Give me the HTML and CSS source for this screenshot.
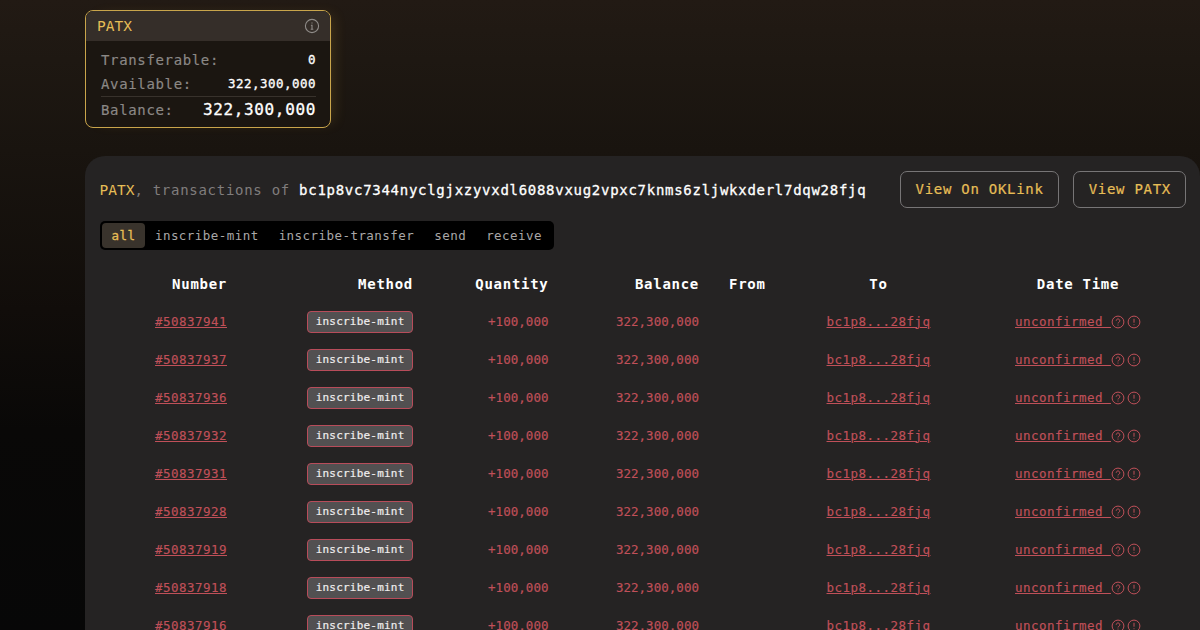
FILE: index.html
```html
<!DOCTYPE html>
<html lang="en">
<head>
<meta charset="utf-8">
<title>PATX transactions</title>
<link rel="stylesheet" href="styles.css">
</head>
<body>
<svg class="defs" width="0" height="0" aria-hidden="true">
  <symbol id="help" viewBox="0 0 14 14"><circle cx="7" cy="7" r="5.9"/><path d="M5.2 5.7a1.8 1.8 0 1 1 2.7 1.6c-.6.35-.9.6-.9 1.1M7 9.6v.9"/></symbol>
  <symbol id="warn" viewBox="0 0 14 14"><circle cx="7" cy="7" r="5.9"/><path d="M7 3.8v3.9M7 9.3v.9"/></symbol>
</svg>
<main class="page">
  <section class="card">
    <header class="card-head">
      <span class="ticker">PATX</span>
      <svg class="info" viewBox="0 0 16 16"><circle cx="8" cy="8" r="6.6"/><path d="M8 4.4v1.2M6.9 7.2H8v4M6.7 11.2h2.6"/></svg>
    </header>
    <dl class="stats">
      <div class="stat"><dt>Transferable:</dt><dd>0</dd></div>
      <div class="stat"><dt>Available:</dt><dd>322,300,000</dd></div>
      <div class="stat total"><dt>Balance:</dt><dd>322,300,000</dd></div>
    </dl>
  </section>
  <section class="panel">
    <div class="panel-head">
      <h1 class="title"><span class="ticker">PATX</span>, transactions of <span class="address">bc1p8vc7344nyclgjxzyvxdl6088vxug2vpxc7knms6zljwkxderl7dqw28fjq</span></h1>
      <div class="actions"><a class="button">View On OKLink</a><a class="button">View PATX</a></div>
    </div>
    <nav class="tabs"><a class="tab active">all</a><a class="tab">inscribe-mint</a><a class="tab">inscribe-transfer</a><a class="tab">send</a><a class="tab">receive</a></nav>
    <table class="table">
      <colgroup><col class="c-number"><col class="c-method"><col class="c-quantity"><col class="c-balance"><col class="c-from"><col class="c-to"><col class="c-date"></colgroup>
      <thead><tr><th>Number</th><th>Method</th><th>Quantity</th><th>Balance</th><th class="left">From</th><th class="center">To</th><th class="center">Date Time</th></tr></thead>
      <tbody>
        <tr><td><a class="link">#50837941</a></td><td><span class="tag">inscribe-mint</span></td><td class="num">+100,000</td><td class="num">322,300,000</td><td></td><td class="center"><a class="link">bc1p8...28fjq</a></td><td class="center"><span class="status"><a class="link">unconfirmed&nbsp;</a><svg><use href="#help"/></svg><svg><use href="#warn"/></svg></span></td></tr>
        <tr><td><a class="link">#50837937</a></td><td><span class="tag">inscribe-mint</span></td><td class="num">+100,000</td><td class="num">322,300,000</td><td></td><td class="center"><a class="link">bc1p8...28fjq</a></td><td class="center"><span class="status"><a class="link">unconfirmed&nbsp;</a><svg><use href="#help"/></svg><svg><use href="#warn"/></svg></span></td></tr>
        <tr><td><a class="link">#50837936</a></td><td><span class="tag">inscribe-mint</span></td><td class="num">+100,000</td><td class="num">322,300,000</td><td></td><td class="center"><a class="link">bc1p8...28fjq</a></td><td class="center"><span class="status"><a class="link">unconfirmed&nbsp;</a><svg><use href="#help"/></svg><svg><use href="#warn"/></svg></span></td></tr>
        <tr><td><a class="link">#50837932</a></td><td><span class="tag">inscribe-mint</span></td><td class="num">+100,000</td><td class="num">322,300,000</td><td></td><td class="center"><a class="link">bc1p8...28fjq</a></td><td class="center"><span class="status"><a class="link">unconfirmed&nbsp;</a><svg><use href="#help"/></svg><svg><use href="#warn"/></svg></span></td></tr>
        <tr><td><a class="link">#50837931</a></td><td><span class="tag">inscribe-mint</span></td><td class="num">+100,000</td><td class="num">322,300,000</td><td></td><td class="center"><a class="link">bc1p8...28fjq</a></td><td class="center"><span class="status"><a class="link">unconfirmed&nbsp;</a><svg><use href="#help"/></svg><svg><use href="#warn"/></svg></span></td></tr>
        <tr><td><a class="link">#50837928</a></td><td><span class="tag">inscribe-mint</span></td><td class="num">+100,000</td><td class="num">322,300,000</td><td></td><td class="center"><a class="link">bc1p8...28fjq</a></td><td class="center"><span class="status"><a class="link">unconfirmed&nbsp;</a><svg><use href="#help"/></svg><svg><use href="#warn"/></svg></span></td></tr>
        <tr><td><a class="link">#50837919</a></td><td><span class="tag">inscribe-mint</span></td><td class="num">+100,000</td><td class="num">322,300,000</td><td></td><td class="center"><a class="link">bc1p8...28fjq</a></td><td class="center"><span class="status"><a class="link">unconfirmed&nbsp;</a><svg><use href="#help"/></svg><svg><use href="#warn"/></svg></span></td></tr>
        <tr><td><a class="link">#50837918</a></td><td><span class="tag">inscribe-mint</span></td><td class="num">+100,000</td><td class="num">322,300,000</td><td></td><td class="center"><a class="link">bc1p8...28fjq</a></td><td class="center"><span class="status"><a class="link">unconfirmed&nbsp;</a><svg><use href="#help"/></svg><svg><use href="#warn"/></svg></span></td></tr>
        <tr><td><a class="link">#50837916</a></td><td><span class="tag">inscribe-mint</span></td><td class="num">+100,000</td><td class="num">322,300,000</td><td></td><td class="center"><a class="link">bc1p8...28fjq</a></td><td class="center"><span class="status"><a class="link">unconfirmed&nbsp;</a><svg><use href="#help"/></svg><svg><use href="#warn"/></svg></span></td></tr>
      </tbody>
    </table>
  </section>
</main>
</body>
</html>
```
FILE: styles.css
```css
* { box-sizing: border-box; }
html { background: #070707; }
body {
  margin: 0;
  height: 630px;
  overflow: hidden;
  background: linear-gradient(#221a14 0, #1e1812 60px, #19140f 150px, #110d0a 310px, #090807 430px, #070707 630px);
  color: #fff;
  font: 14.5px/20px "DejaVu Sans Mono", "Liberation Mono", monospace;
  letter-spacing: 0.4px;
}
.defs { position: absolute; }
.page { padding: 10px 0 0 85px; }

.card {
  width: 246px;
  height: 118px;
  border: 1px solid #c9a54b;
  border-radius: 8px;
  background: #1b1611;
  box-shadow: 8px 0 14px -6px rgba(201, 155, 60, 0.2);
  overflow: hidden;
}
.card-head {
  display: flex;
  align-items: center;
  justify-content: space-between;
  height: 30px;
  padding: 0 10px 0 11px;
  background: #352e29;
}
.ticker {
  color: #e6bd56;
  font-size: 14.5px;
  letter-spacing: 0;
}
.info { width: 16px; height: 16px; fill: none; stroke: #8f8b88; stroke-width: 1.1; }
.stats { margin: 0; padding: 7px 14px 0 15px; }
.stat { display: flex; align-items: center; justify-content: space-between; height: 24px; }
.stat dt { color: #8b8886; font-size: 14px; letter-spacing: 0.65px; -webkit-text-stroke: 0.15px; }
.stat dd { margin: 0; font-size: 12.5px; letter-spacing: 0.47px; -webkit-text-stroke: 0.3px; }
.total { height: 27px; border-top: 1px solid #38322c; }
.total dd { font-size: 16px; letter-spacing: 0.65px; }

.panel {
  width: 1115px;
  height: 474px;
  margin-top: 28px;
  padding: 14px 14px 0;
  border-radius: 20px 20px 0 0;
  background: #252323;
  overflow: hidden;
}
.panel-head { display: flex; align-items: center; justify-content: space-between; height: 38px; }
.title {
  margin: 0;
  padding: 2px 0 0 0.5px;
  color: #807d7d;
  font-size: 14px;
  font-weight: 400;
  letter-spacing: 0.72px;
  white-space: nowrap;
}
.address { color: #fff; -webkit-text-stroke: 0.3px; }
.actions { display: flex; gap: 14px; }
.button {
  height: 37px;
  padding: 0 14px 0 15px;
  border: 1px solid #777576;
  border-radius: 7px;
  color: #e6bd56;
  font-size: 14px;
  line-height: 35px;
  letter-spacing: 0.72px;
  white-space: nowrap;
  -webkit-text-stroke: 0.2px;
}

.tabs {
  display: flex;
  width: 454px;
  height: 29px;
  margin: 13px 0 0 1px;
  padding: 2px;
  border-radius: 5px;
  background: #000;
}
.tab {
  padding: 0 10px;
  border-radius: 4px;
  color: #a9a7a7;
  font-size: 12.5px;
  line-height: 25px;
  letter-spacing: 0.45px;
  white-space: nowrap;
}
.tab.active { background: #39332c; color: #e6bd56; padding: 0 9.5px; -webkit-text-stroke: 0.3px; }

.table {
  width: 1079px;
  margin: 15px 0 0 1px;
  border-collapse: collapse;
  table-layout: fixed;
}
.c-number { width: 142px; }
.c-method { width: 186px; }
.c-quantity { width: 135.5px; }
.c-balance { width: 150.5px; }
.c-from { width: 66px; }
.c-to { width: 197px; }
.c-date { width: 202px; }
.table th, .table td { height: 38px; padding: 0 15px; text-align: right; white-space: nowrap; }
.table th { font-size: 14px; font-weight: 700; letter-spacing: 0.72px; }
.table td { color: #c05059; font-size: 12.5px; letter-spacing: 0.47px; -webkit-text-stroke: 0.15px; }
.table .left { text-align: left; }
.table .center { padding-left: 0; padding-right: 0; text-align: center; }
.table .num { letter-spacing: 0.03px; }
.link { text-decoration: underline; text-underline-offset: 1px; text-decoration-thickness: 1px; }
.tag {
  display: inline-block;
  height: 22px;
  padding: 0 7.5px;
  border: 1px solid #b84c5a;
  border-radius: 4px;
  background: #525051;
  color: #f0eeee;
  font-size: 11px;
  line-height: 20px;
  letter-spacing: 0.21px;
  -webkit-text-stroke: 0.2px;
}
.status { display: inline-flex; align-items: center; }
.status svg { width: 14px; height: 14px; margin-bottom: 1px; fill: none; stroke: #c05059; stroke-width: 1; }
.status svg + svg { margin-left: 2px; }
```
